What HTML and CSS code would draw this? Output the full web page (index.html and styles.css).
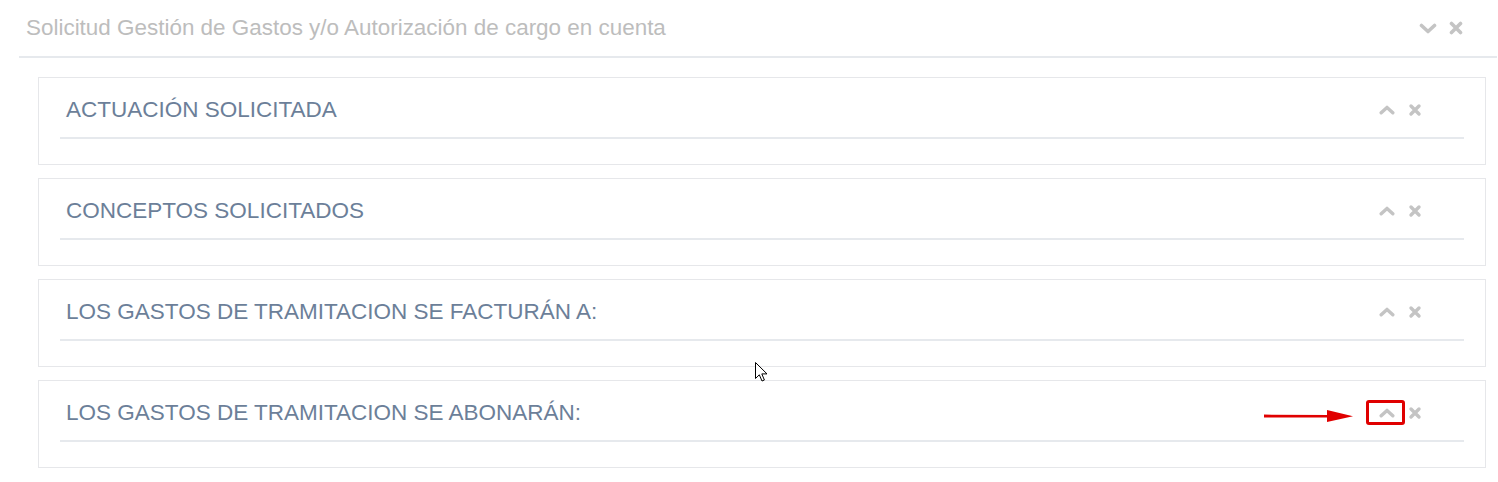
FILE: index.html
```html
<!DOCTYPE html>
<html lang="es">
<head>
<meta charset="utf-8">
<title>Solicitud Gestión de Gastos</title>
<link rel="stylesheet" href="styles.css">
</head>
<body>
<div class="panel">
  <div class="panel-head">
    <span class="panel-title">Solicitud Gestión de Gastos y/o Autorización de cargo en cuenta</span>
    <div class="tools tools-main">
      <span class="tool chev"><svg width="18" height="11" viewBox="0 0 18 11"><polyline points="2.5,2.5 9,8.5 15.5,2.5" fill="none" stroke="currentColor" stroke-width="3.6" stroke-linecap="round" stroke-linejoin="round"/></svg></span>
      <span class="tool x"><svg width="14" height="14" viewBox="0 0 14 14"><path d="M2.5 2.5 L11.5 11.5 M11.5 2.5 L2.5 11.5" stroke="currentColor" stroke-width="3.6" stroke-linecap="round"/></svg></span>
    </div>
  </div>
  <div class="cards">
    <div class="card">
      <div class="card-head">
        <span class="card-title">ACTUACIÓN SOLICITADA</span>
        <div class="tools">
          <span class="tool chev"><svg width="16" height="10" viewBox="0 0 16 10"><polyline points="2.2,7.8 8,2.4 13.8,7.8" fill="none" stroke="currentColor" stroke-width="3.4" stroke-linecap="round" stroke-linejoin="round"/></svg></span>
          <span class="tool x"><svg width="14" height="14" viewBox="0 0 14 14"><path d="M3 3 L11 11 M11 3 L3 11" stroke="currentColor" stroke-width="3.4" stroke-linecap="round"/></svg></span>
        </div>
      </div>
    </div>
    <div class="card">
      <div class="card-head">
        <span class="card-title">CONCEPTOS SOLICITADOS</span>
        <div class="tools">
          <span class="tool chev"><svg width="16" height="10" viewBox="0 0 16 10"><polyline points="2.2,7.8 8,2.4 13.8,7.8" fill="none" stroke="currentColor" stroke-width="3.4" stroke-linecap="round" stroke-linejoin="round"/></svg></span>
          <span class="tool x"><svg width="14" height="14" viewBox="0 0 14 14"><path d="M3 3 L11 11 M11 3 L3 11" stroke="currentColor" stroke-width="3.4" stroke-linecap="round"/></svg></span>
        </div>
      </div>
    </div>
    <div class="card">
      <div class="card-head">
        <span class="card-title">LOS GASTOS DE TRAMITACION SE FACTURÁN A:</span>
        <div class="tools">
          <span class="tool chev"><svg width="16" height="10" viewBox="0 0 16 10"><polyline points="2.2,7.8 8,2.4 13.8,7.8" fill="none" stroke="currentColor" stroke-width="3.4" stroke-linecap="round" stroke-linejoin="round"/></svg></span>
          <span class="tool x"><svg width="14" height="14" viewBox="0 0 14 14"><path d="M3 3 L11 11 M11 3 L3 11" stroke="currentColor" stroke-width="3.4" stroke-linecap="round"/></svg></span>
        </div>
      </div>
    </div>
    <div class="card">
      <div class="card-head">
        <span class="card-title">LOS GASTOS DE TRAMITACION SE ABONARÁN:</span>
        <div class="tools">
          <span class="tool chev marked">
            <svg width="16" height="10" viewBox="0 0 16 10"><polyline points="2.2,7.8 8,2.4 13.8,7.8" fill="none" stroke="currentColor" stroke-width="3.4" stroke-linecap="round" stroke-linejoin="round"/></svg>
            <span class="red-box"></span>
            <svg class="red-arrow" width="90" height="14" viewBox="0 0 90 14"><path d="M0 5.6 L66 5.9 L66 8.6 L0 8.4 Z" fill="#e00000"/><path d="M63 1 L89 7.2 L63 13 Z" fill="#e00000"/></svg>
          </span>
          <span class="tool x"><svg width="14" height="14" viewBox="0 0 14 14"><path d="M3 3 L11 11 M11 3 L3 11" stroke="currentColor" stroke-width="3.4" stroke-linecap="round"/></svg></span>
        </div>
      </div>
    </div>
  </div>
</div>
<svg class="cursor" width="14" height="21" viewBox="0 0 14 21"><path d="M0.5 0.5 L0.5 16.5 L4.3 12.8 L7 19 L9.4 18 L6.8 11.9 L12 11.9 Z" fill="#fff" stroke="#000" stroke-width="1" stroke-linejoin="miter"/></svg>
</body>
</html>
```
FILE: styles.css
```css
html, body {
  margin: 0;
  padding: 0;
  background: #ffffff;
}
body {
  font-family: "Liberation Sans", Arial, sans-serif;
  position: relative;
  width: 1498px;
  height: 482px;
  overflow: hidden;
}
.panel {
  margin-left: 19px;
  width: 1478px;
}
.panel-head {
  display: flex;
  align-items: center;
  justify-content: space-between;
  padding: 16px 34px 16px 7px;
  border-bottom: 2px solid #e6e9ed;
}
.panel-title {
  font-size: 22.45px;
  line-height: 24px;
  color: #bdbdbd;
}
.tools {
  display: flex;
  align-items: center;
  gap: 13px;
}
.tools-main {
  gap: 12px;
}
.tool {
  display: flex;
  color: #c4c4c4;
  position: relative;
}
.cards {
  display: flex;
  flex-direction: column;
  gap: 13px;
  padding: 19px 11px 0 19px;
}
.card {
  border: 1px solid #e6e7ea;
  padding: 0 21px 25px 21px;
}
.card-head {
  display: flex;
  align-items: center;
  justify-content: space-between;
  padding: 20px 42px 15px 6px;
  border-bottom: 2px solid #e6e9ed;
}
.card-title {
  font-size: 22.5px;
  line-height: 24px;
  color: #6c7f99;
}
.red-box {
  position: absolute;
  left: -13px;
  top: -8px;
  width: 33px;
  height: 19px;
  border: 3px solid #e00000;
  border-radius: 3px;
}
.red-arrow {
  position: absolute;
  left: -115px;
  top: 1px;
}
.cursor {
  position: absolute;
  left: 755px;
  top: 362px;
}
```
